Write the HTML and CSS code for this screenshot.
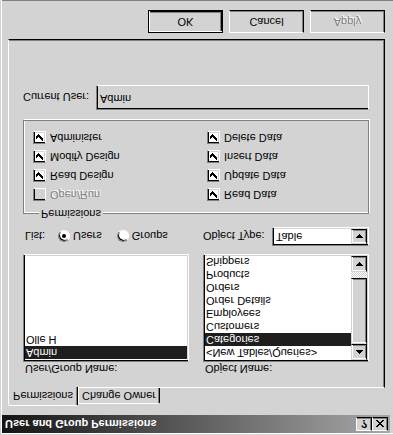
FILE: index.html
```html
<!DOCTYPE html>
<html lang="en">
<head>
    <meta charset="UTF-8">
    <title>User and Group Permissions</title>
    <link rel="stylesheet" href="styles.css">
</head>
<body>
    <svg width="0" height="0" class="defs">
        <defs>
            <symbol id="chk" viewBox="0 0 7 7">
                <rect x="6" y="0" width="1" height="3"/>
                <rect x="5" y="1" width="1" height="3"/>
                <rect x="4" y="2" width="1" height="3"/>
                <rect x="3" y="3" width="1" height="3"/>
                <rect x="2" y="4" width="1" height="3"/>
                <rect x="1" y="3" width="1" height="3"/>
                <rect x="0" y="2" width="1" height="3"/>
            </symbol>
            <symbol id="up" viewBox="0 0 7 4">
                <path d="M3 0h1v1h1v1h1v1h1v1H0V3h1V2h1V1h1z"/>
            </symbol>
            <symbol id="down" viewBox="0 0 7 4">
                <path d="M0 0h7v1H6v1H5v1H4v1H3V3H2V2H1V1H0z"/>
            </symbol>
        </defs>
    </svg>

    <div class="window">
        <div class="titlebar">
            <span class="title">User and Group Permissions</span>
            <div class="cap help">?</div>
            <div class="cap close">
                <svg width="8" height="7" viewBox="0 0 8 7"><path d="M0 0h2v1h1v1h2v-1h1v-1h2v1h-1v1h-1v1h-1v1h1v1h1v1h1v1h-2v-1h-1v-1h-2v1h-1v1h-2v-1h1v-1h1v-1h1v-1h-1v-1h-1v-1h-1v-1h-1z"/></svg>
            </div>
        </div>

        <div class="client">
            <div class="tabs">
                <div class="tab active">Permissions</div>
                <div class="tab">Change Owner</div>
            </div>

            <div class="panel">
                <div class="cols">
                    <div class="label">User/Group Name:</div>
                    <div class="label">Object Name:</div>

                    <div class="listbox">
                        <div class="items">
                            <div class="item sel">Admin</div>
                            <div class="item">Olle H</div>
                        </div>
                    </div>

                    <div class="listbox">
                        <div class="items">
                            <div class="item">&lt;New Tables/Queries&gt;</div>
                            <div class="item sel">Categories</div>
                            <div class="item">Customers</div>
                            <div class="item">Employees</div>
                            <div class="item">Order Details</div>
                            <div class="item">Orders</div>
                            <div class="item">Products</div>
                            <div class="item">Shippers</div>
                        </div>
                        <div class="vscroll">
                            <div class="sb-btn"><svg width="7" height="4"><use href="#up"/></svg></div>
                            <div class="sb-thumb"></div>
                            <div class="sb-track"></div>
                            <div class="sb-btn"><svg width="7" height="4"><use href="#down"/></svg></div>
                        </div>
                    </div>

                    <div class="type-row">
                        <span class="list-label">List:</span>
                        <span class="radio on"></span>
                        <span class="radio-text">Users</span>
                        <span class="radio groups"></span>
                        <span class="radio-text">Groups</span>
                    </div>

                    <div class="type-row">
                        <span class="type-label">Object Type:</span>
                        <div class="combo">
                            <span class="combo-text">Table</span>
                            <span class="combo-btn"><svg width="7" height="4"><use href="#down"/></svg></span>
                        </div>
                    </div>
                </div>

                <fieldset class="group">
                    <legend>Permissions</legend>
                    <div class="perms">
                        <div class="perm disabled"><span class="check off"></span><span>Open/Run</span></div>
                        <div class="perm"><span class="check"><svg width="7" height="7"><use href="#chk"/></svg></span><span>Read Data</span></div>
                        <div class="perm"><span class="check"><svg width="7" height="7"><use href="#chk"/></svg></span><span>Read Design</span></div>
                        <div class="perm"><span class="check"><svg width="7" height="7"><use href="#chk"/></svg></span><span>Update Data</span></div>
                        <div class="perm"><span class="check"><svg width="7" height="7"><use href="#chk"/></svg></span><span>Modify Design</span></div>
                        <div class="perm"><span class="check"><svg width="7" height="7"><use href="#chk"/></svg></span><span>Insert Data</span></div>
                        <div class="perm"><span class="check"><svg width="7" height="7"><use href="#chk"/></svg></span><span>Administer</span></div>
                        <div class="perm"><span class="check"><svg width="7" height="7"><use href="#chk"/></svg></span><span>Delete Data</span></div>
                    </div>
                </fieldset>

                <div class="current-row">
                    <span class="current-label">Current User:</span>
                    <div class="current-box">Admin</div>
                </div>
            </div>

            <div class="buttons">
                <div class="btn default">OK</div>
                <div class="btn">Cancel</div>
                <div class="btn disabled">Apply</div>
            </div>
        </div>
    </div>
</body>
</html>
```

FILE: styles.css
```css
* { box-sizing: border-box; }
html, body { margin: 0; width: 393px; height: 435px; overflow: hidden; background: #d3d3d3; }
body { font: 11px "Liberation Sans", Arial, sans-serif; color: #000; }
.defs { position: absolute; }

/* the whole dialog is shown upside down */
.window { width: 393px; height: 435px; padding: 2px 3px 0 2px; background: #d3d3d3; box-shadow: inset 1px 1px #d3d3d3, inset 2px 2px #fff, inset 0 -1px #808080; transform: scaleY(-1); }

.titlebar { height: 18px; display: flex; align-items: center; padding: 0 2px; background: linear-gradient(to right, #141414, #a8a8a8); }
.title { flex: 1; color: #fff; font-weight: bold; line-height: 18px; padding-left: 1px; }
.cap { width: 16px; height: 14px; display: flex; align-items: center; justify-content: center; background: #d3d3d3; border: 1px solid; border-color: #fff #000 #000 #fff; box-shadow: inset -1px -1px #808080; font-weight: bold; font-size: 11px; line-height: 12px; }

.client { padding: 9px 5px 0 6px; }

.tabs { display: flex; align-items: flex-end; height: 18px; }
.tab { height: 16px; width: 82px; text-align: center; line-height: 14px; border: 1px solid; border-bottom: none; border-color: #fff #000 transparent #fff; border-radius: 2px 2px 0 0; box-shadow: inset -1px 0 #808080; }
.tab.active { width: 70px; height: 19px; margin-bottom: -1px; padding-top: 2px; position: relative; z-index: 1; background: #d3d3d3; }

.panel { height: 349px; padding: 12px 15px 0 14px; border: 1px solid; border-color: #fff #000 #000 #fff; box-shadow: inset -1px -1px #808080; }

.cols { display: grid; grid-template-columns: 166px 166px; column-gap: 14px; }
.label { line-height: 13px; padding-left: 2px; }

.listbox { height: 108px; display: flex; padding: 1px; overflow: hidden; background: #fff; border: 1px solid; border-color: #808080 #fff #fff #808080; box-shadow: inset 1px 1px #000, inset -1px -1px #d3d3d3; }
.items { flex: 1; padding-top: 1px; overflow: hidden; }
.item { height: 13px; line-height: 13px; padding-left: 1px; white-space: nowrap; }
.item.sel { background: #1e1e1e; color: #fff; }

.vscroll { width: 16px; display: flex; flex-direction: column; }
.sb-btn { height: 16px; display: flex; align-items: center; justify-content: center; background: #d3d3d3; border: 1px solid; border-color: #d3d3d3 #000 #000 #d3d3d3; box-shadow: inset 1px 1px #fff, inset -1px -1px #808080; }
.sb-thumb { height: 66px; background: #d3d3d3; border: 1px solid; border-color: #d3d3d3 #000 #000 #d3d3d3; box-shadow: inset 1px 1px #fff, inset -1px -1px #808080; }
.sb-track { flex: 1; background: repeating-conic-gradient(#fff 0 25%, #d3d3d3 0 50%) 0 0 / 2px 2px; }

.type-row { height: 19px; margin-top: 8px; display: flex; align-items: center; }
.list-label { width: 35px; padding-left: 2px; }
.radio { width: 12px; height: 12px; display: flex; align-items: center; justify-content: center; border-radius: 50%; background: #fff; border: 1px solid; border-color: #808080 #fff #fff #808080; box-shadow: inset 1px 1px #000; }
.radio.on::after { content: ""; width: 4px; height: 4px; border-radius: 50%; background: #000; }
.radio-text { margin-left: 3px; }
.radio.groups { margin-left: 15px; }
.type-label { width: 69px; }
.combo { width: 97px; height: 19px; display: flex; padding: 1px; background: #fff; border: 1px solid; border-color: #808080 #fff #fff #808080; box-shadow: inset 1px 1px #000, inset -1px -1px #d3d3d3; }
.combo-text { flex: 1; padding-left: 2px; line-height: 15px; }
.combo-btn { width: 16px; display: flex; align-items: center; justify-content: center; background: #d3d3d3; border: 1px solid; border-color: #d3d3d3 #000 #000 #d3d3d3; box-shadow: inset 1px 1px #fff, inset -1px -1px #808080; }

.group { margin: 7px 0 0; padding: 6px 0 10px 9px; border: 1px solid #808080; box-shadow: inset 1px 1px #fff, 1px 1px #fff; }
.group legend { margin-left: 6px; padding: 0 2px; line-height: 13px; background: #d3d3d3; }
.perms { display: grid; grid-template-columns: 174px 1fr; grid-auto-rows: 13px; row-gap: 6px; }
.perm { display: flex; align-items: center; gap: 4px; line-height: 13px; }
.check { width: 13px; height: 13px; display: flex; align-items: center; justify-content: center; background: #fff; border: 1px solid; border-color: #808080 #fff #fff #808080; box-shadow: inset 1px 1px #000, inset -1px -1px #d3d3d3; }
.check.off { background: #d3d3d3; }
.perm.disabled { color: #808080; text-shadow: 1px 1px #fff; }

.current-row { margin-top: 10px; display: flex; align-items: center; }
.current-label { width: 73px; }
.current-box { width: 273px; height: 25px; line-height: 21px; padding-left: 3px; border: 1px solid; border-color: #808080 #fff #fff #808080; box-shadow: inset 1px 1px #000, inset -1px -1px #d3d3d3; }

.buttons { margin-top: 6px; display: flex; justify-content: flex-end; gap: 6px; }
.btn { width: 75px; height: 23px; line-height: 21px; text-align: center; border: 1px solid; border-color: #fff #000 #000 #fff; box-shadow: inset -1px -1px #808080; }
.btn.default { border-color: #000; box-shadow: inset 1px 1px #fff, inset -1px -1px #000, inset -2px -2px #808080; }
.btn.disabled { color: #808080; text-shadow: 1px 1px #fff; }
```
